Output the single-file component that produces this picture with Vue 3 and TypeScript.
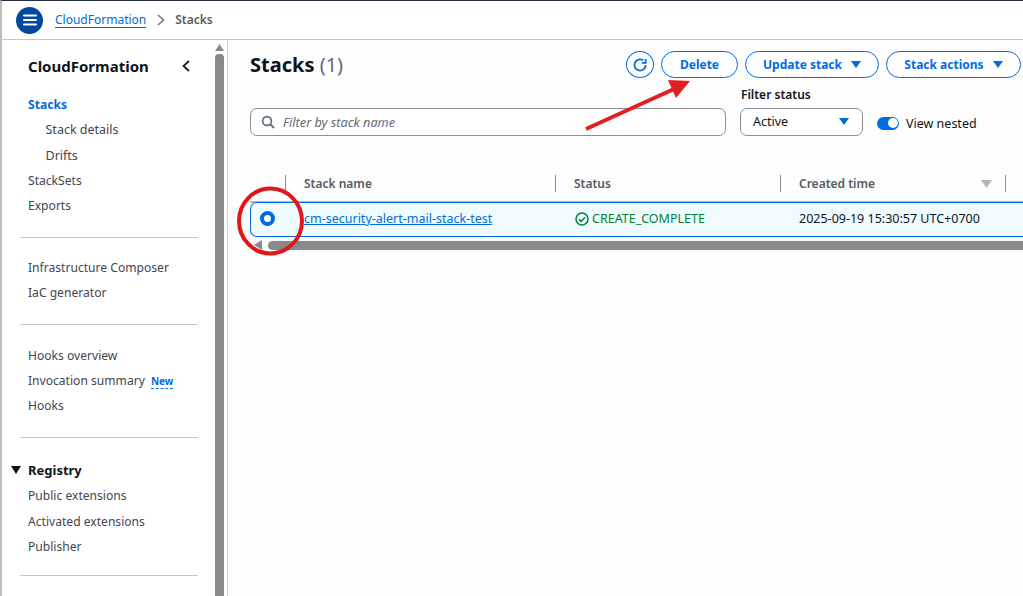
<script setup lang="ts">
interface NavItem { label: string; sub?: boolean; active?: boolean; badge?: string }
const groups: NavItem[][] = [
  [
    { label: 'Stacks', active: true },
    { label: 'Stack details', sub: true },
    { label: 'Drifts', sub: true },
    { label: 'StackSets' },
    { label: 'Exports' }
  ],
  [{ label: 'Infrastructure Composer' }, { label: 'IaC generator' }],
  [{ label: 'Hooks overview' }, { label: 'Invocation summary', badge: 'New' }, { label: 'Hooks' }]
]
const registry: NavItem[] = [
  { label: 'Public extensions' },
  { label: 'Activated extensions' },
  { label: 'Publisher' }
]
</script>

<template>
  <div class="page">
    <header class="topbar">
      <button class="menu" aria-label="Menu">
        <svg width="14" height="12" viewBox="0 0 14 12"><path d="M1 1.5h12M1 6h12M1 10.5h12" stroke="#fff" stroke-width="2" stroke-linecap="round" fill="none" /></svg>
      </button>
      <a class="crumb">CloudFormation</a>
      <svg class="chev" width="10" height="14" viewBox="0 0 10 14"><path d="M2 2l5.5 5L2 12" stroke="#6f7680" stroke-width="1.6" fill="none" /></svg>
      <span class="crumb-now">Stacks</span>
    </header>

    <div class="shell">
      <aside class="side">
        <div class="side-title">
          <span>CloudFormation</span>
          <svg width="10" height="14" viewBox="0 0 10 14"><path d="M8 2L2.5 7 8 12" stroke="#16191f" stroke-width="1.7" fill="none" /></svg>
        </div>
        <template v-for="(group, i) in groups" :key="i">
          <ul class="nav">
            <li v-for="item in group" :key="item.label" :class="{ sub: item.sub, active: item.active }">
              {{ item.label }}<span v-if="item.badge" class="badge">{{ item.badge }}</span>
            </li>
          </ul>
          <hr class="rule" />
        </template>
        <div class="reg-head">
          <svg width="10" height="8" viewBox="0 0 10 8"><path d="M0 0h10L5 8z" fill="#0f141a" /></svg>
          <span>Registry</span>
        </div>
        <ul class="nav reg-list">
          <li v-for="item in registry" :key="item.label">{{ item.label }}</li>
        </ul>
        <hr class="rule" />
      </aside>

      <div class="vscroll">
        <svg width="9" height="7" viewBox="0 0 9 7"><path d="M4.5 0L9 7H0z" fill="#8a8a8a" /></svg>
        <div class="vthumb"></div>
      </div>

      <main class="main">
        <div class="head-row">
          <h1>Stacks <span>(1)</span></h1>
          <div class="actions">
            <button class="btn round" aria-label="Refresh">
              <svg width="16" height="16" viewBox="0 0 16 16"><path d="M13.6 8A5.6 5.6 0 1 1 11.2 3.4" stroke="#006ce0" stroke-width="1.8" fill="none" /><path d="M9.8 5.9h3.9V1.9" stroke="#006ce0" stroke-width="1.8" fill="none" /></svg>
            </button>
            <button class="btn del">Delete</button>
            <button class="btn upd">Update stack<i class="tri"></i></button>
            <button class="btn act">Stack actions<i class="tri"></i></button>
          </div>
        </div>

        <div class="filter-row">
          <div class="search">
            <svg width="14" height="14" viewBox="0 0 14 14"><circle cx="6" cy="6" r="4.4" stroke="#5f6b7a" stroke-width="1.7" fill="none" /><path d="M9.2 9.2L13 13" stroke="#5f6b7a" stroke-width="1.8" /></svg>
            <span>Filter by stack name</span>
          </div>
          <div class="status">
            <label>Filter status</label>
            <div class="select"><span>Active</span><i class="tri"></i></div>
          </div>
          <div class="toggle-wrap">
            <span class="toggle"><i></i></span>
            <span>View nested</span>
          </div>
        </div>

        <div class="table">
          <div class="t-head">
            <div class="cell first"></div>
            <div class="cell">Stack name</div>
            <div class="cell">Status</div>
            <div class="cell time">Created time<svg width="11" height="8" viewBox="0 0 11 8"><path d="M0 0h11L5.5 8z" fill="#b4b4bb" /></svg></div>
            <div class="cell last"></div>
          </div>
          <div class="t-row">
            <div class="radio-cell"><span class="radio"></span></div>
            <div class="name-cell"><a>cm-security-alert-mail-stack-test</a></div>
            <div class="status-cell">
              <svg width="14" height="14" viewBox="0 0 14 14"><circle cx="7" cy="7" r="6" stroke="#00802f" stroke-width="1.5" fill="none" /><path d="M4 7.2l2.2 2.2L10 5.4" stroke="#00802f" stroke-width="1.5" fill="none" /></svg>
              CREATE_COMPLETE
            </div>
            <div class="time-cell">2025-09-19 15:30:57 UTC+0700</div>
          </div>
          <div class="hscroll">
            <svg width="8" height="10" viewBox="0 0 8 10"><path d="M0 5l8-5v10z" fill="#8a8a8a" /></svg>
            <div class="hthumb"></div>
          </div>
        </div>
      </main>
    </div>

    <svg class="marks" width="1023" height="596" viewBox="0 0 1023 596">
      <ellipse cx="270.5" cy="221" rx="31.5" ry="32.5" stroke="#e0161b" stroke-width="4" fill="none" />
      <path d="M586 129L674 89" stroke="#e41f1f" stroke-width="4" fill="none" />
      <path d="M668 80L690 81 676 98z" fill="#e41f1f" />
    </svg>
  </div>
</template>

<style>
html, body { margin: 0; background: #fff; }
</style>

<style scoped>
.page {
  position: relative;
  width: 1023px;
  height: 596px;
  overflow: hidden;
  display: flex;
  flex-direction: column;
  box-sizing: border-box;
  border-top: 1px solid #232f3e;
  border-left: 2px solid #bdbdbd;
  font-family: "Noto Sans", "Open Sans", sans-serif;
  font-size: 12.5px;
  color: #414750;
  background: #fff;
}
.topbar {
  flex: none;
  height: 38px;
  border-bottom: 1px solid #c6c6cd;
  display: flex;
  align-items: center;
  padding-left: 14px;
  box-sizing: content-box;
}
.menu {
  width: 27px;
  height: 27px;
  border: 0;
  padding: 0;
  border-radius: 50%;
  background: #004a9e;
  display: flex;
  align-items: center;
  justify-content: center;
  margin-right: 12px;
}
.crumb {
  color: #006ce0;
  border-bottom: 1px solid #006ce0;
  line-height: 15px;
  font-size: 12px;
  margin-top: -1px;
}
.chev { margin: 0 9px 0 10px; }
.crumb-now { font-weight: 600; color: #545b64; font-size: 12px; margin-top: -2px; }
.shell { flex: 1; display: flex; min-height: 0; }
.side {
  width: 213px;
  flex: none;
  box-sizing: border-box;
  padding: 14px 17px 0 18px;
}
.side-title {
  display: flex;
  justify-content: space-between;
  align-items: center;
  height: 24px;
  padding: 0 7px 0 8px;
  font-size: 15px;
  font-weight: 700;
  color: #0f141a;
  margin-bottom: 14.3px;
}
.nav { list-style: none; margin: 0; padding: 0 0 0 8px; }
.nav li { height: 25.2px; line-height: 25px; white-space: nowrap; font-size: 12.1px; }
.nav li.sub { padding-left: 18px; font-size: 12.5px; margin-left: -0.5px; }
.nav li.active { color: #006ce0; font-weight: 700; }
.badge {
  color: #006ce0;
  font-weight: 700;
  font-size: 10px;
  margin-left: 6px;
  border-bottom: 1px dashed #006ce0;
  line-height: 13px;
  display: inline-block;
}
.rule { border: 0; border-top: 1px solid #c6c6cd; margin: 18.7px 0 17.1px; }
.rule:nth-of-type(2) { margin-bottom: 17.8px; }
.reg-head {
  display: flex;
  align-items: center;
  margin: 19.2px 0 0 -9px;
  height: 26px;
  gap: 7px;
  font-weight: 700;
  color: #0f141a;
  font-size: 13px;
}
.reg-list + .rule { margin-top: 16.6px; }
.vscroll {
  width: 9px;
  flex: none;
  display: flex;
  flex-direction: column;
  align-items: center;
  padding-top: 4px;
  gap: 3px;
}
.vthumb { flex: 1; width: 9px; background: #8a8a8a; border-radius: 4px 4px 0 0; }
.main {
  flex: 1;
  min-width: 0;
  margin-left: 3px;
  border-left: 1px solid #d5d5d8;
  background: #fdfdfd;
  padding: 0 0 0 22px;
}
.head-row { display: flex; height: 44px; padding-top: 11px; box-sizing: content-box; }
h1 { margin: 0; font-size: 20px; line-height: 27px; font-weight: 700; color: #0f141a; }
h1 span { font-weight: 400; color: #5f6b7a; }
.actions { margin-left: auto; display: flex; gap: 7px; padding-right: 2px; align-items: flex-start; }
.btn {
  font: inherit;
  height: 27px;
  border: 1.2px solid #006ce0;
  border-radius: 14px;
  background: #fff;
  color: #006ce0;
  font-weight: 700;
  font-size: 12px;
  padding: 0;
  display: flex;
  align-items: center;
  justify-content: center;
  box-sizing: border-box;
}
.round { width: 28px; border-radius: 50%; }
.del { width: 77px; }
.upd { width: 134px; }
.act { width: 135px; }
.tri {
  display: inline-block;
  width: 0;
  height: 0;
  border-left: 5px solid transparent;
  border-right: 5px solid transparent;
  border-top: 7px solid #006ce0;
}
.btn .tri { margin-left: 9px; }
.filter-row { display: flex; align-items: flex-end; margin-top: -9px; }
.search {
  width: 476px;
  height: 28px;
  box-sizing: border-box;
  border: 1px solid #8c8c94;
  border-radius: 7px;
  background: #fff;
  display: flex;
  align-items: center;
  padding: 0 0 1px 10px;
  gap: 8px;
  font-style: italic;
  font-size: 12.7px;
  color: #5f6b7a;
}
.status { margin-left: 14px; width: 123px; }
.status label { display: block; font-weight: 600; color: #0f141a; font-size: 12px; line-height: 17px; margin-bottom: 5px; padding-left: 1px; }
.select {
  height: 28px;
  box-sizing: border-box;
  border: 1px solid #8c8c94;
  border-radius: 7px;
  background: #fff;
  display: flex;
  align-items: center;
  justify-content: space-between;
  padding: 0 13px 1px 12px;
  color: #0f141a;
}
.select .tri { border-top-color: #006ce0; }
.toggle-wrap { display: flex; align-items: center; gap: 7px; margin-left: 14px; height: 28px; color: #0f141a; position: relative; top: 1px; }
.toggle { width: 22px; height: 13px; border-radius: 7px; background: #006ce0; position: relative; display: block; }
.toggle i { position: absolute; right: 1.5px; top: 1.5px; width: 10px; height: 10px; border-radius: 50%; background: #fff; }
.table { margin-top: 31px; }
.t-head {
  display: grid;
  grid-template-columns: 36px 270px 225px 225px 1fr;
  height: 34px;
  align-items: center;
  font-weight: 600;
  color: #545b64;
  font-size: 12px;
  border-bottom: 2px solid #b6b6bd;
  box-sizing: content-box;
}
.cell { border-right: 1px solid #8c8c94; height: 17px; line-height: 17px; padding-left: 18px; white-space: nowrap; box-sizing: border-box; margin-top: -1px; }
.cell.first { padding: 0; }
.cell.time { display: flex; justify-content: space-between; align-items: center; padding-right: 13px; }
.cell.last { border: 0; }
.t-row {
  display: grid;
  grid-template-columns: 35px 271px 225px 1fr;
  height: 35px;
  box-sizing: border-box;
  margin-top: -1px;
  padding-bottom: 2px;
  align-items: center;
  background: #f0fbff;
  border: 1px solid #006ce0;
  border-right: 0;
  border-radius: 7px 0 0 7px;
  color: #0f141a;
  position: relative;
}
.radio-cell { padding-left: 9px; }
.radio { display: block; width: 15px; height: 15px; border-radius: 50%; box-sizing: border-box; border: 4.5px solid #006ce0; background: #fff; }
.name-cell { padding-left: 18px; }
.name-cell a { color: #006ce0; text-decoration: underline; }
.status-cell { padding-left: 18px; color: #00802f; display: flex; align-items: center; gap: 3px; }
.time-cell { padding-left: 17px; white-space: nowrap; }
.hscroll { display: flex; align-items: center; height: 10px; margin-top: 3px; padding-left: 4px; gap: 6px; }
.hthumb { flex: 1; height: 9px; background: #8a8a8a; border-radius: 5px 0 0 5px; }
.marks { position: absolute; left: -2px; top: -1px; pointer-events: none; }
</style>
